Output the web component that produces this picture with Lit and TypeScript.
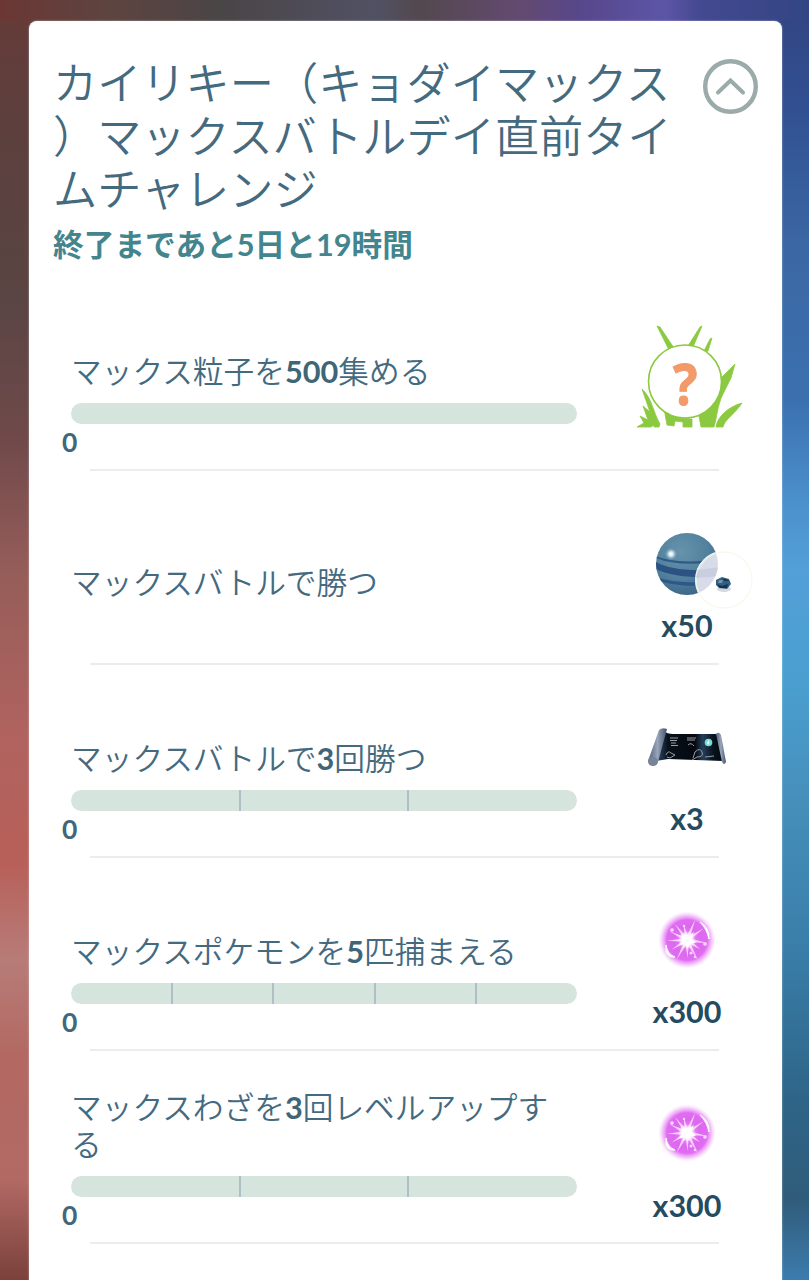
import { LitElement, html, svg, css, nothing } from 'lit';
import { customElement, property } from 'lit/decorators.js';
import { classMap } from 'lit/directives/class-map.js';

interface Task {
    before: string;
    count?: string;
    after?: string;
    rest?: string;
    segments: number;
    icon: string;
    amount?: string;
}

const TITLE = ['カイリキー（キョダイマックス', '）マックスバトルデイ直前タイ', 'ムチャレンジ'];

const TASKS: Task[] = [
    { before: 'マックス粒子を', count: '500', after: '集める', segments: 1, icon: 'grass' },
    { before: 'マックスバトルで勝つ', segments: 0, icon: 'planet', amount: 'x50' },
    { before: 'マックスバトルで', count: '3', after: '回勝つ', segments: 3, icon: 'scroll', amount: 'x3' },
    { before: 'マックスポケモンを', count: '5', after: '匹捕まえる', segments: 5, icon: 'orb', amount: 'x300' },
    { before: 'マックスわざを', count: '3', after: '回レベルアップす', rest: 'る', segments: 3, icon: 'orb', amount: 'x300' },
];

@customElement('reward-icon')
class RewardIcon extends LitElement {
    static styles = css`
      :host {
        display: block;
      }

      svg {
        display: block;
        overflow: visible;
      }

      .mark {
        font: 700 57px "Open Sans", "Noto Sans", sans-serif;
        fill: #f29a69;
        stroke: #f29a69;
      }
    `;

    @property() name = '';

    render() {
        switch (this.name) {
            case 'grass':
                return this.grass();
            case 'planet':
                return this.planet();
            case 'scroll':
                return this.scroll();
            default:
                return this.orb();
        }
    }

    grass() {
        return html`
            <svg width="106" height="110" viewBox="0 0 106 110">
                <g fill="#8bc940" stroke="#8bc940" stroke-width="0.800">
                    <path d="M20 2 L23 3 L37 24 L32 26 Z M65 2 L56 23 L51 22 L63 3 Z M75 14 L71 27 L66 29 L73 15 Z"/>
                    <path d="M98 40 L84 54 L80 75 L62 92 L64 103 L77 103 C80 94 80 82 86 70 L94 54 Z"/>
                    <path d="M105 79 C90 83 80 94 79 103 L86 103 C88 95 98 90 105 79 Z"/>
                    <path d="M5 65 C15 74 16 88 23 100 L22 103 L17 103 L17 101 L14 103 L0 103 L7 99 L3 92 L11 96 L6 82 L13 88 Z"/>
                    <path d="M27 84 L40 94 L55 95 L55 103 L46 103 L46 98 L38 97 L37 102 L30 101 Z"/>
                </g>
                <circle cx="48" cy="57.500" r="36.500" fill="#fff" stroke="#8bc940" stroke-width="1.600"/>
                <text class="mark" x="36" y="80.500" textLength="24.500" lengthAdjust="spacingAndGlyphs">?</text>
            </svg>`;
    }

    planet() {
        return html`
            <svg width="98" height="76" viewBox="0 0 98 76">
                <defs>
                    <radialGradient id="globe" cx="40%" cy="30%" r="75%">
                        <stop offset="0" stop-color="#6793ab"/>
                        <stop offset="0.600" stop-color="#50809d"/>
                        <stop offset="1" stop-color="#3b6484"/>
                    </radialGradient>
                    <radialGradient id="glint">
                        <stop offset="0" stop-color="#fff"/>
                        <stop offset="0.350" stop-color="#d9eaf2"/>
                        <stop offset="1" stop-color="#8fb3c6" stop-opacity="0"/>
                    </radialGradient>
                    <clipPath id="disc"><circle cx="31" cy="31" r="31"/></clipPath>
                </defs>
                <circle cx="31" cy="31" r="31" fill="url(#globe)"/>
                <g clip-path="url(#disc)">
                    <path d="M0 23 Q20 32 64 26 L64 29 Q20 34 0 25 Z" fill="#315b87"/>
                    <path d="M0 29 Q20 40 64 36 L64 44 Q20 46 0 36 Z" fill="#2c5283"/>
                    <path d="M0 44 Q18 51 56 49 L54 53 Q18 54 1 47 Z" fill="#2f5886"/>
                </g>
                <circle cx="15" cy="21" r="6" fill="url(#glint)"/>
                <circle cx="68" cy="47" r="28" fill="#fff" stroke="#f8faee" stroke-width="1.500"/>
                <g clip-path="url(#disc)">
                    <circle cx="68" cy="47" r="28" fill="#d8dce9" stroke="#e6f3ed" stroke-width="2"/>
                    <path d="M42 37 L64 34 L64 43 L40 45 Z" fill="#c8cee0"/>
                </g>
                <ellipse cx="68" cy="56" rx="7" ry="3" fill="#d5d8df"/>
                <path d="M60 47 L66 44 L73 46 L75 51 L71 56 L63 55 L60 52 Z" fill="#345e80"/>
                <path d="M61 51 L66 53 L72 51 L71 55 L64 55 Z M66 46 L69 48 L73 48 L70 46 Z" fill="#192f4e"/>
                <path d="M63 47 L67 47 L66 50 L62 50 Z" fill="#6996ae"/>
            </svg>`;
    }

    scroll() {
        return html`
            <svg width="78" height="40" viewBox="0 0 78 40">
                <defs>
                    <linearGradient id="sheet">
                        <stop offset="0" stop-color="#35506f"/>
                        <stop offset="0.180" stop-color="#08111c"/>
                        <stop offset="0.580" stop-color="#05080f"/>
                        <stop offset="0.700" stop-color="#243f5c"/>
                        <stop offset="0.850" stop-color="#08131e"/>
                        <stop offset="1" stop-color="#03070d"/>
                    </linearGradient>
                    <linearGradient id="rod">
                        <stop offset="0" stop-color="#53627b"/>
                        <stop offset="0.500" stop-color="#98a5ba"/>
                        <stop offset="1" stop-color="#43536c"/>
                    </linearGradient>
                </defs>
                <path d="M16 4 Q19 7 25 7 L70 7 L75 34 L20 32 L8 34 Z" fill="url(#sheet)"/>
                <path d="M11 3 Q14 0 19 2 L10 35 Q4 39 0 34 Z" fill="url(#rod)"/>
                <ellipse cx="5" cy="34.500" rx="5" ry="4.500" fill="#76839b"/>
                <path d="M68 7 Q71 4 73 8 L78 35 Q76 39 74 35 Z" fill="url(#rod)"/>
                <g fill="none" stroke="#9a9f9f" stroke-width="1">
                    <path d="M22 11h8M22 13.500h7M23 16h5M23 18.500h7M39 11h9M39 13h8M40 18q3-3 6 1"/>
                    <path d="M18 28q2-5 5-2l4 2-5 3-3-1M45 31l2-6q5-5 7 0t-5 5l-5 3M57 30l9-1"/>
                </g>
                <circle cx="60.500" cy="15.500" r="3.800" fill="#78dcd5"/>
                <path d="M60.500 13 L61.500 16 L60 18 L59 16 Z" fill="#e8ffff"/>
            </svg>`;
    }

    orb() {
        const rays = [[8, 21], [35, 16], [62, 23], [88, 18], [118, 22], [148, 18], [178, 20], [207, 20], [233, 20], [258, 16], [292, 22], [325, 20]];
        return html`
            <svg width="58" height="58" viewBox="-29 -29 58 58">
                <defs>
                    <radialGradient id="glow">
                        <stop offset="0" stop-color="#f48dfa"/>
                        <stop offset="0.450" stop-color="#dc68ef"/>
                        <stop offset="0.700" stop-color="#e06cf2"/>
                        <stop offset="0.850" stop-color="#ed9ef7" stop-opacity="0.600"/>
                        <stop offset="1" stop-color="#f8d5fc" stop-opacity="0"/>
                    </radialGradient>
                    <radialGradient id="core">
                        <stop offset="0" stop-color="#fff"/>
                        <stop offset="0.500" stop-color="#fff" stop-opacity="0.900"/>
                        <stop offset="1" stop-color="#fff" stop-opacity="0"/>
                    </radialGradient>
                </defs>
                <circle r="29" fill="url(#glow)"/>
                ${rays.map(([angle, length]) => svg`
                    <path d="M0 -2 L${length} 0 L0 2 Z" transform="rotate(${angle})" fill="#ffe3ff" opacity="0.850"/>`)}
                <circle r="9" fill="url(#core)"/>
                <path d="M-6 -6 L0 -3 L7 -8 L4 -1 L9 3 L3 3 L1 8 L-2 4 L-8 5 L-4 0 Z" fill="#fff"/>
                <path d="M13 -18 Q23 -12 22 -1 Q20 -11 13 -18 Z M-21 5 Q-20 14 -12 17 Q-18 18 -21 12 Z" fill="#fff" stroke="#fff"/>
                <g fill="#ffd9ff">
                    <circle cx="-15" cy="-10" r="1.800"/>
                    <circle cx="18" cy="4" r="1.800"/>
                    <circle cx="4" cy="13" r="1.500"/>
                    <circle cx="8" cy="17" r="1.300"/>
                    <circle cx="-3" cy="-14" r="1.200"/>
                </g>
            </svg>`;
    }
}

@customElement('task-row')
class TaskRow extends LitElement {
    static styles = css`
      :host {
        display: flex;
        justify-content: space-between;
        box-sizing: border-box;
        height: 193.3px;
        padding: 0 42px;
        background: linear-gradient(#e9eeed, #e9eeed) 61px 100% / 629px 2px no-repeat;
      }

      .task {
        display: flex;
        flex-direction: column;
        justify-content: flex-end;
        width: 506px;
        padding-bottom: 11px;
      }

      .task.plain {
        padding-bottom: 63.5px;
      }

      .label {
        font-size: 30.7px;
        font-weight: 350;
        line-height: 37px;
        white-space: nowrap;
        color: #446a7f;
      }

      .label b {
        color: #3f6579;
      }

      .bar {
        display: flex;
        height: 21px;
        margin-top: 13px;
        border-radius: 11px;
        overflow: hidden;
        background: #d5e4dc;
      }

      .segment {
        flex: 1;
      }

      .segment + .segment {
        margin-left: -1px;
        padding-left: 1px;
        box-shadow: inset 2px 0 #adc1c4;
      }

      .progress {
        height: 36px;
        margin-left: -9px;
        font-size: 26.5px;
        font-weight: 700;
        line-height: 36px;
        color: #41677a;
      }

      .reward {
        display: flex;
        flex-direction: column;
        align-items: center;
        width: 106px;
      }

      .art {
        display: flex;
        align-items: center;
        height: 76px;
        margin-top: 44px;
      }

      .art.planet {
        margin: 62px -18px -18px 18px;
      }

      .art.grass {
        height: 106px;
        margin: 48px -3px 0 3px;
      }

      .amount {
        margin-top: 15.5px;
        font-size: 30.5px;
        font-weight: 700;
        line-height: 36px;
        color: #254b60;
      }
    `;

    @property({ attribute: false }) task!: Task;

    render() {
        const { before, count, after, rest, segments, icon, amount } = this.task;
        return html`
            <div class=${classMap({ task: true, plain: segments === 0 })}>
                <div class="label">${before}${count ? html`<b>${count}</b>` : nothing}${after}${rest ? html`<br>${rest}` : nothing}</div>
                ${segments ? this.renderBar(segments) : nothing}
            </div>
            <div class="reward">
                <reward-icon class="art ${icon}" .name=${icon}></reward-icon>
                ${amount ? html`<div class="amount">${amount}</div>` : nothing}
            </div>
        `;
    }

    renderBar(segments: number) {
        return html`
            <div class="bar">
                ${Array.from({ length: segments }, () => html`<div class="segment"></div>`)}
            </div>
            <div class="progress">0</div>
        `;
    }
}

@customElement('app-root')
class AppRoot extends LitElement {
    static styles = css`
      :host {
        display: block;
        box-sizing: border-box;
        width: 809px;
        height: 1280px;
        padding: 21px 27px 0 29px;
        overflow: hidden;
        font-family: Lato, "Noto Sans CJK JP", sans-serif;
        text-spacing-trim: space-all;
        background:
          linear-gradient(90deg, #6b3734 0, #5d4440 110px, #4a4546 220px, #515164 375px, #53484e 420px, #634a70 520px, #57478b 580px, #5c55a7 665px, #444990 700px, #324583 809px) 0 0 / 809px 21px no-repeat,
          linear-gradient(#653b38 0, #5b403e 150px, #594543 300px, #70494a 440px, #955d59 570px, #b1635f 740px, #b75f58 860px, #b77c78 960px, #b36861 1060px, #b26964 1180px, #7b413b 1280px) 0 0 / 50% 100% no-repeat,
          linear-gradient(#324481 0, #315092 110px, #3b68a4 250px, #3b70af 400px, #4b90cb 500px, #539fd8 570px, #4a9fd0 680px, #468fbb 800px, #397ea9 950px, #2e6487 1100px, #305c7a 1200px, #3c7cae 1280px) 100% 0 / 50% 100% no-repeat;
      }

      .card {
        box-sizing: border-box;
        height: 1270px;
        border-radius: 8px;
        overflow: hidden;
        background: #fff;
        box-shadow: 0 0 2px rgba(255, 255, 255, 0.6);
      }

      .header {
        display: flex;
        justify-content: space-between;
        box-sizing: border-box;
        height: 257px;
        padding: 35px 24px 0 24px;
      }

      h1 {
        margin: 0;
        font-size: 44.2px;
        font-weight: 350;
        line-height: 53px;
        white-space: nowrap;
        color: #446a7f;
      }

      .remaining {
        margin-top: 10px;
        font-size: 30.7px;
        font-weight: 700;
        line-height: 40px;
        color: #43858f;
      }

      .toggle {
        width: 55px;
        height: 55px;
        margin-top: 2.5px;
        padding: 0;
        border: 0;
        background: none;
      }

      .toggle svg {
        display: block;
      }
    `;

    render() {
        return html`
            <div class="card">
                <div class="header">
                    <div>
                        <h1>${TITLE.map(line => html`<div>${line}</div>`)}</h1>
                        <div class="remaining">終了まであと5日と19時間</div>
                    </div>
                    <button class="toggle">
                        <svg width="55" height="55" viewBox="0 0 55 55" fill="none" stroke="#9aaba9">
                            <circle cx="27.500" cy="27.500" r="25.300" stroke-width="4.400"/>
                            <path d="M15 33.500 L27.500 21.500 L40 33.500" stroke-width="4" stroke-linecap="round"/>
                        </svg>
                    </button>
                </div>
                ${TASKS.map(task => html`<task-row .task=${task}></task-row>`)}
            </div>
        `;
    }
}
